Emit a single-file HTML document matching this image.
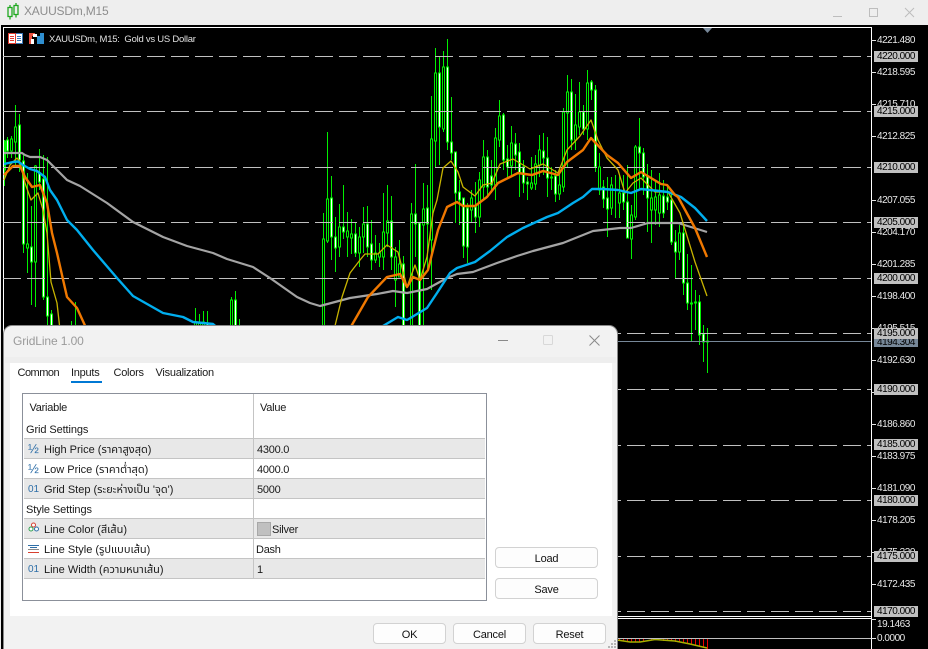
<!DOCTYPE html>
<html><head><meta charset="utf-8"><style>
html,body{margin:0;padding:0;width:928px;height:649px;overflow:hidden;background:#000}
#root{position:absolute;left:0;top:0;width:928px;height:649px;overflow:hidden;background:#000;font-family:"Liberation Sans","Noto Sans Thai","Noto Sans CJK SC",sans-serif;font-size:11px}
#root div{position:absolute;white-space:nowrap}
#root .ax{left:877px;color:#e8e8e8;font-size:10px;letter-spacing:-.47px;line-height:12px;height:12px}
#root .lb{left:874px;width:44px;height:11px;background:#c0c0c0;color:#000;font-size:10px;letter-spacing:-.47px;line-height:12px;text-indent:3px;overflow:hidden}
#root .tk{left:871px;width:5px;height:1px;background:#e4e4e4}
#root .r{left:24px;width:461px;height:19px;border-top:1px solid #c4c4c4}
#root .g{background:#e8e8e8}
#root .t{color:#1a1a1a;font-size:11px;letter-spacing:-.25px;line-height:14px;height:14px}
#root .th{letter-spacing:0}
#root .b{background:#fdfdfd;border:1px solid #d2d2d2;border-radius:4px;box-sizing:border-box;text-align:center;color:#111;font-size:11px;letter-spacing:-.2px;line-height:22px}
#root .i{color:#2f6fa8;font-size:10px;left:28px;letter-spacing:0;line-height:14px;height:14px}
</style></head><body><div id="root">
<div style="left:0;top:0;width:928px;height:25px;background:#eee"></div>
<svg style="position:absolute;left:0;top:0" width="928" height="25"><path d="M9.500 8.500h4v9h-4zM15.500 6.500h4v9h-4zM11.500 6v2.500M11.500 17.500v3M17.500 4v2.500M17.500 15.500v3" transform="translate(-1.500 -1)" fill="none" stroke="#20a820" stroke-width="1.300"/><path d="M833 16.500h9M869.500 8.500h8v8h-8zM905 8l9 9M914 8l-9 9" fill="none" stroke="#bdbdbd"/></svg>
<div style="left:24px;top:3px;color:#8d8d8d;font-size:12px;line-height:16px;letter-spacing:-.2px">XAUUSDm,M15</div>
<div style="left:0;top:0;width:1px;height:649px;background:#eee"></div>

<svg style="position:absolute;left:0;top:0" width="928" height="649">
<path fill="none" stroke="#fff" d="M3.500 649V27.500H871.500V649M3.500 616.500H871.500M3.500 618.500H871.500"/>
<g fill="none" stroke="#00f000" stroke-width="1">
<path d="M4.500 140V186M7.500 137V158M11.500 136V158M15.500 105V165M19.500 114V172M23.500 155V253M27.500 173V273M31.500 206V305M35.500 165V307M39.500 149V190M43.500 155V300M47.500 157V335M51.500 310V330M71.500 321V330M75.500 302V330M195.500 308V330M199.500 314V330M203.500 311V330M207.500 311V330M211.500 323V330M231.500 297V330M235.500 291V330M239.500 319V330M323.500 213V330M327.500 132V243M331.500 176V260M335.500 217V272M339.500 204V257M343.500 185V239M347.500 212V257M351.500 219V254M355.500 222V257M359.500 227V267M363.500 207V253M367.500 206V257M371.500 220V270M375.500 235V263M379.500 243V267M383.500 193V270M387.500 185V247M391.500 196V270M395.500 247V307M399.500 240V277M403.500 256V330M411.500 203V330M415.500 164V257M419.500 223V330M423.500 183V330M427.500 185V270M431.500 96V290M435.500 48V167M439.500 57V165M443.500 51V132M447.500 39V150M451.500 97V160M455.500 152V223M459.500 180V225M463.500 198V258M467.500 203V263M471.500 190V222M475.500 182V233M479.500 172V227M483.500 140V200M487.500 150V195M491.500 160V193M495.500 128V200M499.500 100V147M503.500 113V170M507.500 145V177M511.500 126V177M515.500 133V170M519.500 143V197M523.500 160V193M527.500 177V200M531.500 157V190M535.500 155V190M539.500 135V177M543.500 133V175M547.500 137V197M551.500 167V190M555.500 170V202M559.500 167V200M563.500 108V192M567.500 75V167M571.500 79V150M575.500 94V150M579.500 82V135M583.500 105V135M587.500 70V140M591.500 80V100M595.500 85V172M599.500 153V195M603.500 180V208M607.500 177V237M611.500 177V215M615.500 175V218M619.500 175V218M623.500 175V210M627.500 165V238M631.500 205V259M635.500 145V220M639.500 118V190M643.500 148V195M647.500 164V232M651.500 170V243M655.500 180V225M659.500 173V227M663.500 180V218M667.500 185V210M671.500 190V245M675.500 230V278M679.500 225V260M683.500 225V295M687.500 254V310M691.500 265V341M695.500 290V330M699.500 295V345M703.500 325V362M707.500 328V373"/>
<path fill="#000" d="M4.500 141h1V170h-1zM10.500 139h2V151h-2zM14.500 127h2V142h-2zM26.500 244h2V248h-2zM34.500 166h2V262h-2zM194.500 322h2V330h-2zM198.500 323h2V330h-2zM202.500 322h2V330h-2zM230.500 300h2V330h-2zM322.500 239h2V330h-2zM326.500 199h2V241h-2zM338.500 227h2V247h-2zM346.500 231h2V237h-2zM350.500 234h2V238h-2zM358.500 237h2V253h-2zM362.500 224h2V237h-2zM374.500 253h2V260h-2zM378.500 253h2V257h-2zM382.500 232h2V257h-2zM386.500 221h2V233h-2zM394.500 257h2V280h-2zM398.500 264h2V277h-2zM410.500 214h2V330h-2zM422.500 209h2V225h-2zM430.500 139h2V240h-2zM434.500 73h2V141h-2zM442.500 67h2V129h-2zM470.500 198h2V210h-2zM478.500 180h2V217h-2zM482.500 157h2V187h-2zM494.500 138h2V185h-2zM498.500 116h2V140h-2zM510.500 143h2V166h-2zM530.500 183h2V188h-2zM534.500 164h2V184h-2zM538.500 150h2V165h-2zM558.500 185h2V194h-2zM562.500 112h2V187h-2zM566.500 92h2V113h-2zM574.500 125h2V140h-2zM578.500 112h2V127h-2zM586.500 83h2V129h-2zM598.500 167h2V190h-2zM610.500 185h2V208h-2zM618.500 193h2V203h-2zM630.500 215h2V239h-2zM634.500 147h2V217h-2zM650.500 198h2V210h-2zM654.500 197h2V210h-2zM658.500 195h2V213h-2zM678.500 233h2V252h-2z"/>
<path fill="#fff" d="M6.500 140h2V151h-2zM18.500 125h2V160h-2zM22.500 161h2V244h-2zM30.500 247h2V262h-2zM38.500 173h2V182h-2zM42.500 179h2V297h-2zM46.500 297h2V316h-2zM50.500 314h2V330h-2zM234.500 300h2V330h-2zM206.500 323h2V330h-2zM330.500 198h2V237h-2zM334.500 237h2V248h-2zM342.500 227h2V232h-2zM354.500 234h2V253h-2zM366.500 224h2V247h-2zM370.500 244h2V260h-2zM390.500 221h2V257h-2zM402.500 264h2V330h-2zM414.500 214h2V224h-2zM418.500 223h2V330h-2zM426.500 208h2V224h-2zM438.500 73h2V127h-2zM446.500 67h2V142h-2zM450.500 142h2V153h-2zM454.500 152h2V193h-2zM458.500 192h2V200h-2zM462.500 198h2V246h-2zM466.500 208h2V247h-2zM474.500 207h2V217h-2zM486.500 157h2V187h-2zM490.500 176h2V185h-2zM502.500 115h2V160h-2zM506.500 159h2V167h-2zM514.500 144h2V155h-2zM518.500 152h2V174h-2zM522.500 167h2V183h-2zM526.500 182h2V184h-2zM542.500 151h2V158h-2zM546.500 158h2V178h-2zM550.500 177h2V178h-2zM554.500 176h2V194h-2zM570.500 92h2V140h-2zM582.500 112h2V129h-2zM590.500 82h2V90h-2zM594.500 90h2V167h-2zM602.500 187h2V199h-2zM606.500 198h2V209h-2zM622.500 193h2V202h-2zM626.500 202h2V238h-2zM638.500 147h2V153h-2zM642.500 153h2V177h-2zM646.500 177h2V198h-2zM662.500 196h2V213h-2zM666.500 197h2V202h-2zM670.500 200h2V242h-2zM674.500 242h2V252h-2zM682.500 233h2V283h-2zM686.500 283h2V303h-2zM690.500 303h2V304h-2zM694.500 302h2V303h-2zM698.500 302h2V335h-2zM702.500 334h2V342h-2zM706.500 341h2V342h-2z"/>
</g>
<path fill="none" stroke="#c0c0c0" stroke-dasharray="18 6" d="M3 56.500H871M3 111.500H871M3 167.500H871M3 222.500H871M3 278.500H871M3 333.500H871M3 389.500H871M3 445.500H871M3 500.500H871M3 556.500H871M3 611.500H871"/>
<path fill="none" stroke="#778899" d="M600 341.500H871"/>
<path fill="#778899" d="M703 28h9l-4.500 5z"/>
<g fill="none" stroke-linejoin="round">
<polyline stroke="#a4a4a4" stroke-width="2.200" points="4,153 22,153 25,155 30,157 40,157 47,160 55,168 67,180 80,186 107,203 133,222 163,237 187,246 213,253 227,259 253,267 270,278 297,297 310,303 320,306 350,298 377,294 393,291 407,293 427,289 447,278 457,274 473,272 497,263 517,256 533,251 563,243 593,231 620,228 631,228 648,223 678,223 707,232"/>
<polyline stroke="#c8b400" stroke-width="1.300" points="4,180 10,165 17,158 20,162 25,183 31,200 38,193 43,210 47,233 51,282 57,303 60,330"/>
<polyline stroke="#c8b400" stroke-width="1.300" points="334,330 342,297 350,273 360,260 365,254 378,254 387,245 398,252 407,287 415,265 420,280 427,257 433,213 437,200 443,168 451,161 458,172 463,187 475,196 483,185 492,183 500,164 513,159 530,169 543,164 558,173 567,150 580,136 591,120 598,140 607,158 618,170 625,193 633,183 641,178 648,185 655,192 668,192 680,213 695,262 707,296"/>
<polyline stroke="#00aeef" stroke-width="2.400" points="4,164 13,162 18,161.500 23,165 30,169 37,171 45,177 50,190 57,200 67,220 77,230 93,250 117,278 133,296 163,313 183,317 193,322 213,324 220,330"/>
<polyline stroke="#00aeef" stroke-width="2.400" points="375,330 383,326 398,317 407,320 417,314 427,308 437,293 450,273 457,268 475,262 490,251 507,237 523,228 547,217 558,213 573,203 583,197 592,189 603,189 618,190 631,193 641,189 668,192 681,197 695,208 707,221"/>
<polyline stroke="#f07800" stroke-width="2.400" points="4,175 13,166 20,166 25,177 32,187 40,185 47,203 52,233 57,253 67,297 77,308 87,330"/>
<polyline stroke="#f07800" stroke-width="2.400" points="349,330 368,297 387,277 400,274 407,287 413,277 420,280 428,270 438,230 447,207 457,202 463,206 475,206 487,197 498,183 510,177 518,173 532,175 543,171 558,175 567,162 583,150 591,138 607,155 618,163 631,178 641,172 651,178 661,184 667,185 675,195 678,197 695,228 707,257"/>
</g>
<path stroke="#f00000" fill="none" d="M619.500 638V641M623.500 638V641M627.500 638V642M631.500 638V642M635.500 638V642M639.500 638V642M643.500 638V641M651.500 638V640M655.500 638V640M663.500 638V641M667.500 638V641M671.500 638V641M675.500 638V642M679.500 638V642M683.500 638V643M687.500 638V643M691.500 638V645M695.500 638V646M699.500 638V646M703.500 638V647M707.500 638V649"/>
<path fill="none" stroke="#a8b000" stroke-width="1.500" d="M617 640L630 642L640 642L655 639.500L675 641L690 644L707 648"/>
<path fill="none" stroke="#c0c0c0" d="M617 638.500H871"/>
<path d="M871 619.500h5M871 638.500h5" stroke="#e4e4e4"/>
</svg>

<svg style="position:absolute;left:8px;top:33px" width="38" height="11"><rect x=".5" y=".5" width="14" height="10" fill="#fff" stroke="#3878b8"/><rect x=".5" y=".5" width="7" height="10" fill="#fff" stroke="#e03c30"/><path d="M2 3.500h4M2 5.500h4M2 7.500h4" stroke="#e03c30"/><path d="M9 3.500h4M9 5.500h4M9 7.500h4" stroke="#3878b8"/><path d="M21 0h6v3h-3v8h-3z" fill="#e85040"/><path d="M29 3h7v8h-7z" fill="#2f8fd0"/><path d="M25 1h4v3h-4z" fill="#fff"/><path d="M32 0h4v3h-4z" fill="#2f8fd0"/><rect x="23" y="6" width="3" height="5" fill="#fff"/></svg>
<div style="left:49px;top:34px;color:#e0e0e0;font-size:9.500px;line-height:12px;white-space:pre;letter-spacing:-.25px">XAUUSDm, M15:  Gold vs US Dollar</div>

<div class="tk" style="top:40px"></div><div class="ax" style="top:35px">4221.480</div>
<div class="tk" style="top:72px"></div><div class="ax" style="top:67px">4218.595</div>
<div class="tk" style="top:104px"></div><div class="ax" style="top:99px">4215.710</div>
<div class="tk" style="top:136px"></div><div class="ax" style="top:131px">4212.825</div>
<div class="tk" style="top:200px"></div><div class="ax" style="top:195px">4207.055</div>
<div class="tk" style="top:232px"></div><div class="ax" style="top:227px">4204.170</div>
<div class="tk" style="top:264px"></div><div class="ax" style="top:259px">4201.285</div>
<div class="tk" style="top:296px"></div><div class="ax" style="top:291px">4198.400</div>
<div class="tk" style="top:328px"></div><div class="ax" style="top:323px">4195.515</div>
<div class="tk" style="top:360px"></div><div class="ax" style="top:355px">4192.630</div>
<div class="tk" style="top:392px"></div><div class="ax" style="top:387px">4189.745</div>
<div class="tk" style="top:424px"></div><div class="ax" style="top:419px">4186.860</div>
<div class="tk" style="top:456px"></div><div class="ax" style="top:451px">4183.975</div>
<div class="tk" style="top:488px"></div><div class="ax" style="top:483px">4181.090</div>
<div class="tk" style="top:520px"></div><div class="ax" style="top:515px">4178.205</div>
<div class="tk" style="top:552px"></div><div class="ax" style="top:547px">4175.320</div>
<div class="tk" style="top:584px"></div><div class="ax" style="top:579px">4172.435</div>
<div class="ax" style="top:619px">19.1463</div>
<div class="ax" style="top:633px">0.0000</div>

<div class="lb" style="top:51px">4220.000</div>
<div class="lb" style="top:106px">4215.000</div>
<div class="lb" style="top:162px">4210.000</div>
<div class="lb" style="top:217px">4205.000</div>
<div class="lb" style="top:273px">4200.000</div>
<div class="lb" style="top:338px;background:#778899;height:9px;line-height:9px">4194.304</div>
<div class="lb" style="top:328px">4195.000</div>
<div class="lb" style="top:384px">4190.000</div>
<div class="lb" style="top:439px">4185.000</div>
<div class="lb" style="top:495px">4180.000</div>
<div class="lb" style="top:551px">4175.000</div>
<div class="lb" style="top:606px">4170.000</div>

<!-- dialog -->
<div style="left:4px;top:326px;width:613px;height:340px;background:#f2f2f2;border-radius:8px;box-shadow:0 0 0 1px #8a8a8a"></div>
<div style="left:5px;top:357px;width:611px;height:6px;background:#eeeeee"></div>
<div style="left:13px;top:333px;color:#9a9a9a;font-size:12px;line-height:16px;letter-spacing:-.1px">GridLine 1.00</div>
<svg style="position:absolute;left:490px;top:330px" width="120" height="20"><path d="M8 10.500h10" stroke="#8a8a8a" fill="none"/><rect x="53.500" y="5.500" width="9" height="9" rx="1" fill="none" stroke="#d8d8d8"/><path d="M99.500 5.500l10 10M109.500 5.500l-10 10" stroke="#8a8a8a" fill="none"/></svg>
<div style="left:10px;top:363px;width:602px;height:253px;background:#fff"></div>
<div class="t" style="left:17.500px;top:366px;letter-spacing:-.5px">Common</div>
<div class="t" style="left:71px;top:366px">Inputs</div>
<div class="t" style="left:113.500px;top:366px">Colors</div>
<div class="t" style="left:155.500px;top:366px">Visualization</div>
<div style="left:71px;top:381px;width:31px;height:2px;background:#0078d4"></div>

<div style="left:22px;top:393px;width:463px;height:206px;border:1px solid #8b909a;background:#fff"></div>
<div class="r g" style="top:438px"></div>
<div class="r" style="top:458px"></div>
<div class="r g" style="top:478px"></div>
<div class="r" style="top:498px"></div>
<div class="r g" style="top:518px"></div>
<div class="r" style="top:538px"></div>
<div class="r g" style="top:558px"></div>
<div class="r" style="top:578px;height:0"></div>
<div style="left:253px;top:394px;width:1px;height:185px;background:#c4c4c4"></div>

<div class="t" style="left:29.500px;top:401px">Variable</div>
<div class="t" style="left:260px;top:401px">Value</div>
<div class="t th" style="left:26px;top:423px;letter-spacing:-.1px">Grid Settings</div>
<div class="t th" style="left:26px;top:503px;letter-spacing:-.1px">Style Settings</div>
<div class="i" style="top:442px;font-size:13px">½</div>
<div class="i" style="top:462px;font-size:13px">½</div>
<div class="i" style="top:483px">01</div>
<div class="i" style="top:563px">01</div>
<svg style="position:absolute;left:28px;top:522px" width="12" height="50"><circle cx="5.500" cy="3" r="2" fill="#fff" stroke="#d84030"/><circle cx="3" cy="7" r="2" fill="#fff" stroke="#30a050"/><circle cx="8.500" cy="7" r="2" fill="#fff" stroke="#2f6fa8"/><path d="M0 23.500h11M2 25.500h7" stroke="#2f6fa8"/><path d="M0 27.500h11" stroke="#888"/><path d="M0 30.500h11" stroke="#d84030"/></svg>
<div class="t th" style="left:44px;top:443px">High Price (ราคาสูงสุด)</div>
<div class="t th" style="left:44px;top:463px">Low Price (ราคาต่ำสุด)</div>
<div class="t th" style="left:44px;top:483px">Grid Step (ระยะห่างเป็น 'จุด')</div>
<div class="t th" style="left:44px;top:523px">Line Color (สีเส้น)</div>
<div class="t th" style="left:44px;top:543px">Line Style (รูปแบบเส้น)</div>
<div class="t th" style="left:44px;top:563px">Line Width (ความหนาเส้น)</div>
<div class="t" style="left:257px;top:443px">4300.0</div>
<div class="t" style="left:257px;top:463px">4000.0</div>
<div class="t" style="left:257px;top:483px">5000</div>
<div style="left:257px;top:522px;width:12px;height:12px;background:#c0c0c0;border:1px solid #a8a8a8"></div>
<div class="t" style="left:272px;top:523px">Silver</div>
<div class="t" style="left:256px;top:543px">Dash</div>
<div class="t" style="left:257px;top:563px">1</div>

<div class="b" style="left:495px;top:547px;width:103px;height:21px">Load</div>
<div class="b" style="left:495px;top:578px;width:103px;height:21px">Save</div>
<div class="b" style="left:373px;top:623px;width:73px;height:21px">OK</div>
<div class="b" style="left:453px;top:623px;width:73px;height:21px">Cancel</div>
<div class="b" style="left:533px;top:623px;width:73px;height:21px">Reset</div>
<svg style="position:absolute;left:607px;top:639px" width="10" height="10"><path fill="#b5b5b5" d="M7 1h2v2H7zM4 4h2v2H4zM7 4h2v2H7zM1 7h2v2H1zM4 7h2v2H4zM7 7h2v2H7z"/></svg>
</div></body></html>
